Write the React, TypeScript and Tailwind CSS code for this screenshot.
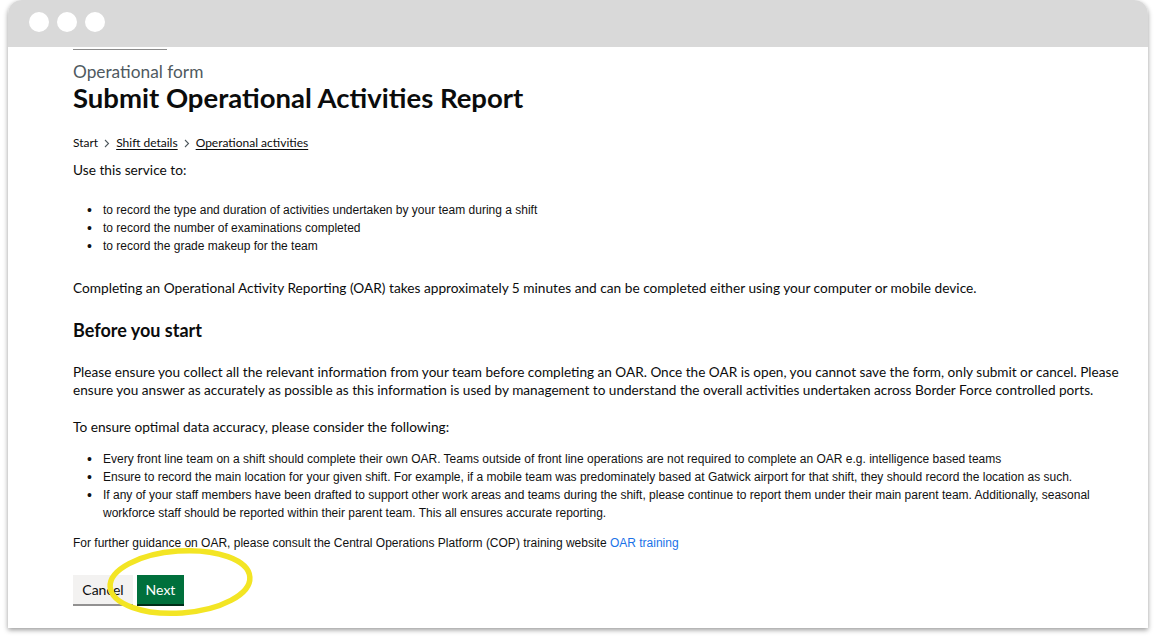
import React from "react";

const gds = { fontFamily: "Lato, 'Liberation Sans', sans-serif" };
const arial = { fontFamily: "'Liberation Sans', Arial, sans-serif" };

const serviceItems = [
  "to record the type and duration of activities undertaken by your team during a shift",
  "to record the number of examinations completed",
  "to record the grade makeup for the team",
];

const guidanceItems = [
  "Every front line team on a shift should complete their own OAR. Teams outside of front line operations are not required to complete an OAR e.g. intelligence based teams",
  "Ensure to record the main location for your given shift. For example, if a mobile team was predominately based at Gatwick airport for that shift, they should record the location as such.",
  "If any of your staff members have been drafted to support other work areas and teams during the shift, please continue to report them under their main parent team. Additionally, seasonal workforce staff should be reported within their parent team. This all ensures accurate reporting.",
];

function Bullets({ items }: { items: string[] }) {
  return (
    <ul className="text-[12px] leading-[18px] text-[#111]" style={arial}>
      {items.map((t) => (
        <li key={t} className="flex">
          <span className="w-[30px] shrink-0 pl-[14px] text-[14px]">•</span>
          <span>{t}</span>
        </li>
      ))}
    </ul>
  );
}

function Chevron() {
  return (
    <svg className="mx-[6px] h-[9px] w-[6px] text-[#505a5f]" viewBox="0 0 6 9" fill="none">
      <path d="M1 1l3.5 3.5L1 8" stroke="currentColor" strokeWidth="1.1" />
    </svg>
  );
}

export default function App() {
  return (
    <div className="h-[638px] w-[1156px] bg-white">
      <div className="relative ml-[8px] w-[1140px] overflow-hidden rounded-t-[14px] shadow-[0_2px_5px_rgba(0,0,0,0.4)]">
        {/* window chrome */}
        <div className="flex h-[47px] items-start gap-[8px] bg-[#d9d9d9] pl-[21px] pt-[12px]">
          <span className="h-[20px] w-[20px] rounded-full bg-white" />
          <span className="h-[20px] w-[20px] rounded-full bg-white" />
          <span className="h-[20px] w-[20px] rounded-full bg-white" />
        </div>

        {/* page */}
        <div className="h-[579px] bg-white pl-[65px] pr-[8px] text-[#0b0c0c]" style={gds}>
          <div className="mt-[2px] h-px w-[94px] bg-[#8c8c8c]" />
          <p className="mt-[12px] text-[17.3px] leading-[20px] text-[#505a5f]">Operational form</p>
          <h1 className="mt-[1px] text-[27.5px] font-bold leading-[30px]">Submit Operational Activities Report</h1>

          <nav className="mt-[22px] flex items-center text-[12px] leading-[16px]">
            <span>Start</span>
            <Chevron />
            <a className="underline underline-offset-2">Shift details</a>
            <Chevron />
            <a className="underline underline-offset-2">Operational activities</a>
          </nav>

          <p className="mt-[10px] text-[13.7px] leading-[18px]">Use this service to:</p>
          <div className="mt-[22px]">
            <Bullets items={serviceItems} />
          </div>

          <p className="mt-[24px] text-[13.7px] leading-[18px]">
            Completing an Operational Activity Reporting (OAR) takes approximately 5 minutes and can be completed either using your computer or mobile device.
          </p>

          <h2 className="mt-[22px] text-[18px] font-bold leading-[22px]">Before you start</h2>

          <p className="mt-[22px] text-[13.6px] leading-[18px]">
            Please ensure you collect all the relevant information from your team before completing an OAR. Once the OAR is open, you cannot save the form, only submit or cancel. Please ensure you answer as accurately as possible as this information is used by management to understand the overall activities undertaken across Border Force controlled ports.
          </p>

          <p className="mt-[19px] text-[13.7px] leading-[18px]">To ensure optimal data accuracy, please consider the following:</p>
          <div className="mt-[14px]">
            <Bullets items={guidanceItems} />
          </div>

          <p className="mt-[12px] text-[12px] leading-[18px] text-[#111]" style={arial}>
            For further guidance on OAR, please consult the Central Operations Platform (COP) training website{" "}
            <a className="text-[#1a73e8]">OAR training</a>
          </p>

          <div className="mt-[23px] flex gap-[4px]">
            <button className="h-[29px] w-[60px] bg-[#f3f2f1] text-[14px] text-[#0b0c0c] shadow-[0_2px_0_#929191]">Cancel</button>
            <button className="h-[29px] w-[47px] bg-[#00703c] text-[14px] text-white shadow-[0_2px_0_#002d18]">Next</button>
          </div>
        </div>

        {/* highlight annotation */}
        <svg className="pointer-events-none absolute left-[96px] top-[546px]" width="152" height="72" viewBox="0 0 152 72">
          <ellipse cx="76" cy="36" rx="70" ry="31" fill="none" stroke="#f3e524" strokeWidth="5.5" transform="rotate(-4 76 36)" />
        </svg>
      </div>
    </div>
  );
}
